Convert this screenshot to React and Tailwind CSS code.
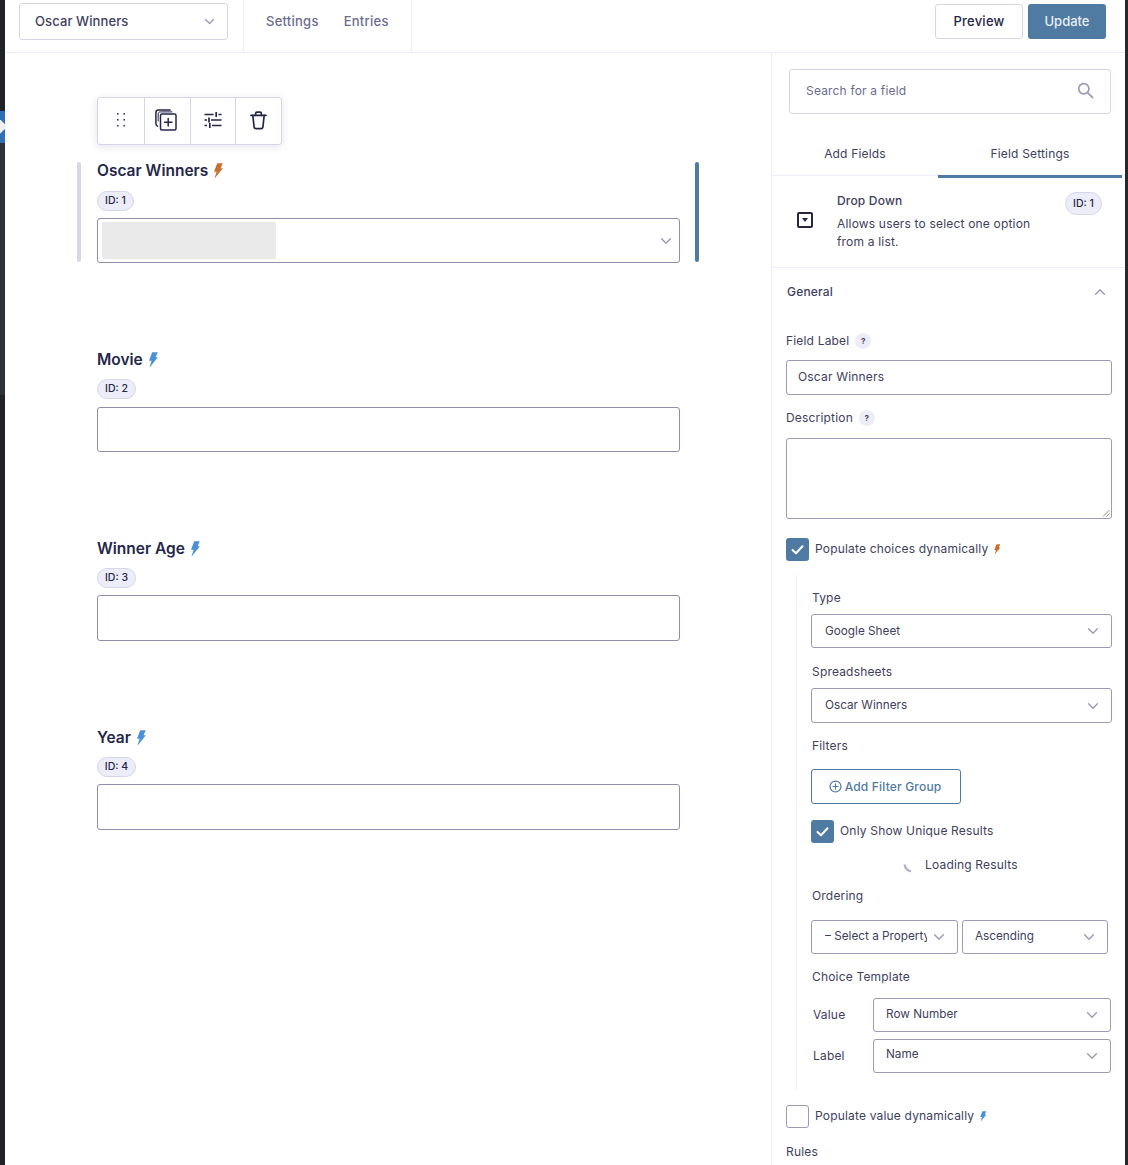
import React from "react";

const Chevron = ({ className = "" }) => (
  <svg viewBox="0 0 16 16" className={className} fill="none" stroke="currentColor" strokeWidth="1.6" strokeLinecap="round" strokeLinejoin="round">
    <path d="M3 5.5 8 10.5 13 5.5" />
  </svg>
);

const Bolt = ({ className = "" }) => (
  <svg viewBox="0 0 10 16" className={className} fill="currentColor">
    <path d="M4.2 0.2 9.8 0.2 7.6 5.2 9.9 5.2 1.4 15.8 3.6 8.8 1 8.8 Z" />
  </svg>
);

const Check = () => (
  <svg viewBox="0 0 23 23" className="w-[23px] h-[23px]" fill="none" stroke="#fff" strokeWidth="2" strokeLinecap="round" strokeLinejoin="round">
    <path d="M6.5 12 10 15.2 16.5 8.3" />
  </svg>
);

const Checkbox = ({ checked }) => (
  <div className={checked ? "w-[23px] h-[23px] rounded-[3px] bg-[#4f7ba3] shrink-0" : "w-[23px] h-[23px] rounded-[3px] bg-white border border-[#9b9ab8] shrink-0"}>
    {checked && <Check />}
  </div>
);

const Badge = ({ children, className = "" }) => (
  <div className={`inline-flex items-center justify-center rounded-full bg-[#ecedf8] border border-[#d5d7e9] text-[10.5px] font-medium text-[#242748] tracking-normal ${className}`}>
    {children}
  </div>
);

const Select = ({ children, className = "", textClass = "", pad = "pl-[12px]" }) => (
  <div className={`flex items-center justify-between bg-white border border-[#9b9ab8] rounded-[3px] text-[11.75px] tracking-normal text-[#3e415c] ${pad} pr-[11px] ${className}`}>
    <span className={`overflow-hidden whitespace-nowrap ${textClass}`}>{children}</span>
    <Chevron className="w-[14px] h-[14px] text-[#9b9ab8] shrink-0" />
  </div>
);

const Help = () => (
  <span className="inline-flex items-center justify-center w-[16px] h-[16px] rounded-full bg-[#ecedf8] text-[8px] font-bold text-[#3e415c]">?</span>
);

const FormField = ({ label, id, bolt, idw, badgeClass, inputClass, children, mb = "" }) => (
  <div className={`relative ${mb}`}>
    <div className="flex items-center h-[17px] gap-[5px] text-[15.5px] font-semibold text-[#242748]">
      {label}
      <Bolt className={`w-[10px] h-[16px] ${bolt}`} />
    </div>
    <Badge className={`h-[20px] ${badgeClass} ${idw}`}>ID: {id}</Badge>
    <div className={`rounded-[3px] border border-[#8f8db0] bg-white relative ${inputClass}`}>{children}</div>
  </div>
);

const ToolCell = ({ children, last, w }) => (
  <div className={`flex items-center justify-center h-full pb-[2px] ${w} ${last ? "" : "border-r border-[#d5d7e9]"}`}>{children}</div>
);

export default function App() {
  return (
    <div className="flex w-[1128px] h-[1165px] overflow-hidden bg-white" style={{ fontFamily: "Inter, 'Noto Sans', sans-serif" }}>
      {/* admin strip */}
      <div className="w-[5px] h-full flex flex-col shrink-0">
        <div className="h-[111px] bg-[#1d2327]" />
        <div className="h-[32px] bg-[#2f6fb5] relative overflow-hidden">
          <div className="absolute left-[-6px] top-[10px] w-[11px] h-[11px] rotate-45 bg-[#f0f0f1]" />
        </div>
        <div className="h-[252px] bg-[#2c3338]" />
        <div className="flex-1 bg-[#1d2327]" />
      </div>

      <div className="flex-1 flex flex-col min-w-0">
        {/* header */}
        <div className="h-[53px] flex border-b border-[#ecedf8] shrink-0">
          <div className="w-[239px] pl-[14px] pt-[3px] border-r border-[#ecedf8] shrink-0">
            <div className="w-[209px] h-[37px] flex items-center justify-between pl-[15px] pr-[11px] rounded-[3px] border border-[#d5d7e9] text-[13px] tracking-[0.1px] font-medium text-[#3e415c]">
              Oscar Winners
              <Chevron className="w-[13px] h-[13px] text-[#9b9ab8]" />
            </div>
          </div>
          <div className="w-[168px] flex items-center gap-[25px] pl-[22px] pb-[8px] border-r border-[#ecedf8] text-[13px] tracking-[0.25px] font-medium text-[#6b6d8c] shrink-0">
            <span>Settings</span>
            <span>Entries</span>
          </div>
          <div className="flex-1 flex justify-end gap-[5px] pt-[4px] pr-[19px]">
            <div className="w-[88px] h-[35px] flex items-center justify-center rounded-[3px] border border-[#d5d7e9] text-[13px] tracking-[0.25px] font-medium text-[#242748]">Preview</div>
            <div className="w-[78px] h-[35px] flex items-center justify-center rounded-[3px] bg-[#4f7ba3] text-[13px] font-medium text-[#e8eef4]">Update</div>
          </div>
        </div>

        <div className="flex-1 flex min-h-0">
          {/* canvas */}
          <div className="w-[766px] shrink-0 pl-[92px] pt-[44px]">
            <div className="w-[185px] h-[48px] flex items-center rounded-[3px] border border-[#d5d7e9] bg-white shadow-[0_2px_8px_rgba(40,40,90,0.12)]">
              <ToolCell w="w-[47px]">
                <svg viewBox="0 0 12 16" className="w-[12px] h-[16px]" fill="#3e415c">
                  <rect x="2" y="1" width="1.6" height="1.6" /><rect x="8.4" y="1" width="1.6" height="1.6" />
                  <rect x="2" y="7" width="1.6" height="1.6" /><rect x="8.4" y="7" width="1.6" height="1.6" />
                  <rect x="2" y="13" width="1.6" height="1.6" /><rect x="8.4" y="13" width="1.6" height="1.6" />
                </svg>
              </ToolCell>
              <ToolCell w="w-[46px] pr-[4px]">
                <svg viewBox="0 0 22 22" className="w-[22px] h-[22px]" fill="none" stroke="#242748" strokeWidth="1.5" strokeLinecap="round" strokeLinejoin="round">
                  <rect x="5.5" y="5" width="15.5" height="16" rx="1.5" />
                  <path d="M13.2 9.5v7.5M9.5 13.2h7.5" />
                  <path d="M2.6 17.2C1.4 16.6 0.9 15.8 0.9 14.6V3.6C0.9 2 2 0.9 3.6 0.9H15.2" />
                  <path d="M3.2 12V5C3.2 3.6 4 2.9 5.4 2.9H17" strokeWidth="1" />
                </svg>
              </ToolCell>
              <ToolCell w="w-[45px] pr-[1px]">
                <svg viewBox="0 0 18 18" className="w-[18px] h-[18px]" fill="none" stroke="#242748" strokeWidth="1.7">
                  <path d="M0.5 3.5H9.5M14.5 3.5H17.5M12.2 1v5" />
                  <path d="M0.5 9H3M7 9H17.5M5 6.5v5" />
                  <path d="M0.5 14.5H3M8 14.5H17.5M5.8 12v5" />
                </svg>
              </ToolCell>
              <ToolCell w="flex-1 pr-[1px]" last>
                <svg viewBox="0 0 18 20" className="w-[17px] h-[19px]" fill="none" stroke="#242748" strokeWidth="1.8" strokeLinejoin="round" strokeLinecap="round">
                  <path d="M1 4.5H17" />
                  <path d="M6 4.5V2.5C6 1.7 6.6 1.2 7.3 1.2H10.7C11.4 1.2 12 1.7 12 2.5V4.5" />
                  <path d="M3 4.5 4.3 16.6C4.4 17.8 5.2 18.6 6.3 18.6H11.7C12.8 18.6 13.6 17.8 13.7 16.6L15 4.5" />
                </svg>
              </ToolCell>
            </div>

            <div className="w-[583px] mt-[17px]">
              <div className="relative mb-[88px]">
                <div className="absolute left-[-20px] top-0 w-[4px] h-[100px] rounded-full bg-[#d5d7e9]" />
                <div className="absolute left-[598px] top-0 w-[4px] h-[100px] rounded-full bg-[#4f7ba3]" />
                <FormField label="Oscar Winners" id="1" bolt="text-[#c96f2e]" idw="w-[37px]" badgeClass="mt-[12px]" inputClass="mt-[7px] h-[45px]">
                  <div className="absolute left-[4px] top-[3px] w-[174px] h-[37px] rounded-[2px] bg-[#eaeaea]" />
                  <Chevron className="absolute right-[6px] top-[15px] w-[14px] h-[14px] text-[#9b9ab8]" />
                </FormField>
              </div>
              <FormField label="Movie" id="2" bolt="text-[#4a90d9]" idw="w-[39px]" badgeClass="mt-[11px]" inputClass="mt-[8px] h-[45px]" mb="mb-[88px]" />
              <FormField label="Winner Age" id="3" bolt="text-[#4a90d9]" idw="w-[39px]" badgeClass="mt-[11px]" inputClass="mt-[7px] h-[46px]" mb="mb-[88px]" />
              <FormField label="Year" id="4" bolt="text-[#4a90d9]" idw="w-[39px]" badgeClass="mt-[11px]" inputClass="mt-[7px] h-[46px]" />
            </div>
          </div>

          {/* right panel */}
          <div className="w-[354px] shrink-0 border-l border-[#ecedf8] text-[#3e415c] text-[12px] tracking-[0.18px] overflow-hidden">
            <div className="pl-[17px] pt-[16px]">
              <div className="w-[322px] h-[45px] flex items-center justify-between pl-[16px] pr-[16px] pb-[2px] rounded-[3px] border border-[#d5d7e9] text-[#6b6d8c]">
                Search for a field
                <svg viewBox="0 0 18 18" className="w-[17px] h-[17px]" fill="none" stroke="#9b9ab8" strokeWidth="1.8" strokeLinecap="round">
                  <circle cx="7.2" cy="7.2" r="5.4" />
                  <path d="M11.2 11.2 16.5 16.5" />
                </svg>
              </div>
            </div>
            <div className="flex w-[350px] h-[64px]">
              <div className="w-[166px] h-[62px] flex items-center justify-center pt-[18px] border-b border-[#ecedf8]">Add Fields</div>
              <div className="w-[184px] h-[64px] flex items-center justify-center pt-[18px] border-b-[3px] border-[#4f7ba3]">Field Settings</div>
            </div>

            <div className="h-[90px] flex border-b border-[#ecedf8] relative">
              <div className="w-[65px] shrink-0 flex justify-center pt-[34px]">
                <div className="w-[16px] h-[16px] rounded-[2px] border-2 border-[#242748] flex items-center justify-center">
                  <div className="w-0 h-0 border-l-[3px] border-r-[3px] border-t-[4px] border-l-transparent border-r-transparent border-t-[#242748]" />
                </div>
              </div>
              <div className="pt-[14px]">
                <div className="font-medium leading-[18px]">Drop Down</div>
                <div className="mt-[5px] leading-[18px]">Allows users to select one option<br />from a list.</div>
              </div>
              <Badge className="absolute left-[293px] top-[14px] w-[37px] h-[23px]">ID: 1</Badge>
            </div>

            <div className="pl-[14px] w-[340px]">
              <div className="flex items-center justify-between h-[48px] pl-[1px] font-medium">
                General
                <svg viewBox="0 0 16 16" className="w-[14px] h-[14px] mr-[5px]" fill="none" stroke="#9b9ab8" strokeWidth="1.6" strokeLinecap="round" strokeLinejoin="round">
                  <path d="M3 10.5 8 5.5 13 10.5" />
                </svg>
              </div>

              <div className="mt-[16px] h-[18px] flex items-center gap-[6px]">Field Label <Help /></div>
              <div className="mt-[10px] h-[35px] w-[326px] flex items-center pl-[11px] pb-[1px] rounded-[3px] border border-[#9b9ab8]">Oscar Winners</div>
              <div className="mt-[14px] h-[18px] flex items-center gap-[6px]">Description <Help /></div>
              <div className="relative mt-[11px] h-[81px] w-[326px] rounded-[3px] border border-[#9b9ab8]">
                <svg viewBox="0 0 8 8" className="absolute right-[1px] bottom-[1px] w-[8px] h-[8px]" stroke="#777" strokeWidth="0.8">
                  <path d="M1 7.5 7.5 1M4.5 7.5 7.5 4.5" />
                </svg>
              </div>

              <div className="mt-[19px] flex items-center gap-[6px]">
                <Checkbox checked />
                <span className="-mt-[1px]">Populate choices dynamically</span>
                <Bolt className="w-[8px] h-[11px] -ml-[1px] text-[#c96f2e]" />
              </div>

              <div className="mt-[14px] ml-[10px] pl-[14px] border-l border-[#ecedf8] h-[515px] w-[316px]">
                <div className="pt-[14px] pl-[1px] h-[31px] leading-[18px]">Type</div>
                <Select pad="pl-[13px]" className="mt-[8px] h-[34px] w-[301px]" textClass="mt-[1px]">Google Sheet</Select>
                <div className="mt-[15px] pl-[1px] leading-[18px]">Spreadsheets</div>
                <Select pad="pl-[13px]" className="mt-[7px] h-[35px] w-[301px]">Oscar Winners</Select>
                <div className="mt-[14px] pl-[1px] leading-[18px]">Filters</div>
                <div className="mt-[14px] w-[150px] h-[35px] flex items-center justify-center gap-[3px] pr-[2px] rounded-[3px] border border-[#4f7ba3] text-[#4f7ba3] font-medium">
                  <svg viewBox="0 0 14 14" className="w-[13px] h-[13px]" fill="none" stroke="#4f7ba3" strokeWidth="1.3">
                    <circle cx="7" cy="7" r="5.9" />
                    <path d="M7 3.8v6.4M3.8 7h6.4" />
                  </svg>
                  Add Filter Group
                </div>
                <div className="mt-[16px] flex items-center gap-[6px]">
                  <Checkbox checked />
                  <span className="-mt-[1px]">Only Show Unique Results</span>
                </div>
                <div className="mt-[13px] h-[18px] flex items-center pl-[92px] gap-[12px]">
                  <svg viewBox="0 0 10 10" className="w-[10px] h-[10px] mt-[6px] shrink-0" fill="none" stroke="#b3b2cb" strokeWidth="2.2">
                    <path d="M1.5 1.5C2 4.5 4.5 7.5 8 8.5" />
                  </svg>
                  <span>Loading Results</span>
                </div>
                <div className="mt-[13px] pl-[1px] leading-[18px]">Ordering</div>
                <div className="mt-[15px] flex gap-[4px]">
                  <Select pad="pl-[13px]" className="h-[34px] w-[147px]" textClass="w-[102px] -mt-[1px]">– Select a Property</Select>
                  <Select className="h-[34px] w-[146px]" textClass="-mt-[1px]">Ascending</Select>
                </div>
                <div className="mt-[14px] pl-[1px] leading-[18px]">Choice Template</div>
                <div className="mt-[12px] flex items-center">
                  <span className="w-[62px] pl-[2px]">Value</span>
                  <Select className="h-[34px] w-[238px]" textClass="-mt-[1px]">Row Number</Select>
                </div>
                <div className="mt-[7px] flex items-center">
                  <span className="w-[62px] pl-[2px]">Label</span>
                  <Select className="h-[34px] w-[238px]" textClass="-mt-[3px]">Name</Select>
                </div>
              </div>

              <div className="mt-[15px] flex items-center gap-[6px]">
                <Checkbox />
                <span className="-mt-[1px]">Populate value dynamically</span>
                <Bolt className="w-[8px] h-[11px] -ml-[1px] text-[#4a90d9]" />
              </div>
              <div className="mt-[15px] leading-[18px]">Rules</div>
            </div>
          </div>
        </div>
      </div>
      <div className="w-[3px] h-full bg-[#26282c] shrink-0" />
    </div>
  );
}
